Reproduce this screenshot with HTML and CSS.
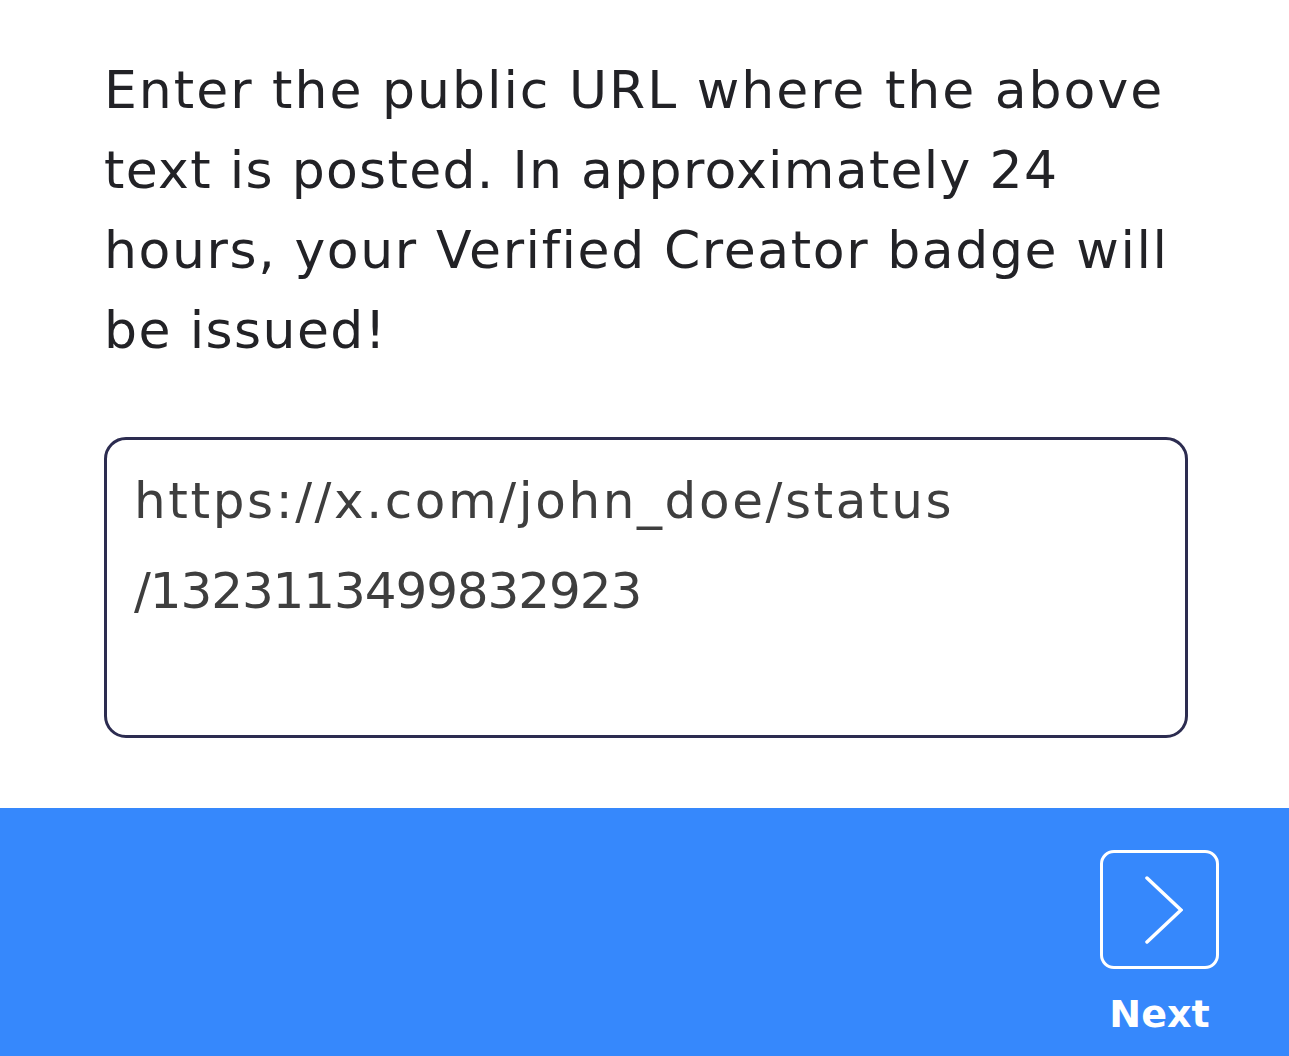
FILE: index.html
```html
<!DOCTYPE html>
<html>
<head>
<meta charset="utf-8">
<link rel="stylesheet" href="styles.css">
</head>
<body>
<main class="content">
  <p class="intro"><span class="l1">Enter the public URL where the above</span><br><span class="l2">text is posted. In approximately 24</span><br><span class="l3">hours, your Verified Creator badge will</span><br><span class="l4">be issued!</span></p>
  <div class="url-box"><span class="url-a">https://x.com/john_doe/status</span><br><span class="url-b">/1323113499832923</span></div>
</main>
<footer class="bar">
  <button class="next">
    <span class="next-icon">
      <svg width="40" height="72" viewBox="0 0 40 72"><polyline points="4,4 38,36 4,68" fill="none" stroke="#fff" stroke-width="3.5" stroke-linecap="round" stroke-linejoin="miter"/></svg>
    </span>
    <span class="next-label">Next</span>
  </button>
</footer>
</body>
</html>
```
FILE: styles.css
```css
html, body {
  margin: 0;
  padding: 0;
  background: #fff;
}
body {
  width: 1289px;
  height: 1056px;
  overflow: hidden;
  display: flex;
  flex-direction: column;
  font-family: "DejaVu Sans", sans-serif;
}
.content {
  padding: 50px 0 0 104px;
  height: 758px;
  box-sizing: border-box;
}
.intro {
  margin: 0;
  font-size: 52px;
  line-height: 80px;
  color: #222226;
  white-space: nowrap;
}
.l1 { letter-spacing: 2px; }
.l2 { letter-spacing: 1.3px; }
.l3 { letter-spacing: 1.6px; }
.l4 { letter-spacing: 1.4px; }
.url-box {
  margin-top: 67px;
  width: 1084px;
  height: 301px;
  box-sizing: border-box;
  border: 3px solid #2c2c50;
  border-radius: 22px;
  padding: 16px 27px 0 27px;
  font-size: 50px;
  line-height: 90px;
  color: #3e3e3e;
  white-space: nowrap;
}
.url-a { letter-spacing: 2.6px; }
.url-b { letter-spacing: -1.1px; }
.bar {
  margin-top: 50px;
  flex: 1;
  background: #3688fc;
  display: flex;
  justify-content: flex-end;
  padding: 42px 70px 0 0;
}
.next {
  background: none;
  border: 0;
  padding: 0;
  display: flex;
  flex-direction: column;
  align-items: center;
  gap: 22px;
  cursor: pointer;
}
.next-icon {
  width: 119px;
  height: 119px;
  box-sizing: border-box;
  border: 3px solid #fff;
  border-radius: 14px;
  display: flex;
  align-items: center;
  justify-content: center;
  padding-left: 6px;
}
.next-label {
  font-family: "DejaVu Sans", sans-serif;
  font-weight: bold;
  font-size: 38px;
  line-height: 46px;
  color: #fff;
}
```
